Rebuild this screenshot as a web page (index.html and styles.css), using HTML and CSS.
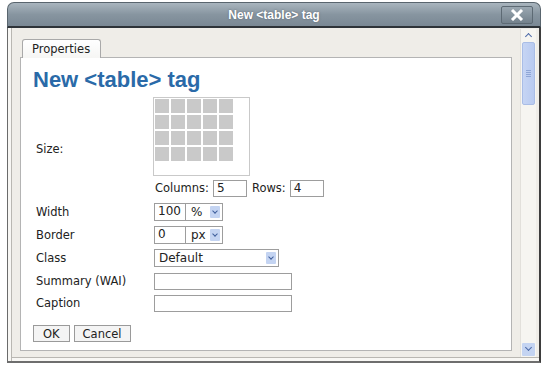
FILE: index.html
```html
<!DOCTYPE html>
<html>
<head>
    <title>New &lt;table&gt; tag</title>
    <link rel="stylesheet" href="styles.css">
</head>
<body>
    <div class="window">
        <div class="titlebar">
            <span class="title">New &lt;table&gt; tag</span>
            <div class="close">
                <svg width="14" height="12" viewBox="0 0 14 12"><path d="M2 1 L12 11 M12 1 L2 11" stroke="#fff" stroke-width="3"/></svg>
            </div>
        </div>
        <div class="frame">
            <div class="content">
                <div class="tabs">
                    <div class="tab">Properties</div>
                </div>
                <div class="panel">
                    <h1 class="heading">New &lt;table&gt; tag</h1>

                    <div class="form">
                        <div class="label size-label">Size:</div>
                        <div class="field">
                            <div class="picker">
                                <span></span><span></span><span></span><span></span><span></span>
                                <span></span><span></span><span></span><span></span><span></span>
                                <span></span><span></span><span></span><span></span><span></span>
                                <span></span><span></span><span></span><span></span><span></span>
                            </div>
                        </div>
                        <div class="field">
                            <span class="inline-label">Columns:</span>
                            <div class="input short">5</div>
                            <span class="inline-label rows">Rows:</span>
                            <div class="input short">4</div>
                        </div>

                        <div class="label">Width</div>
                        <div class="field">
                            <div class="input num">100</div>
                            <div class="select unit">%<i class="arrow"></i></div>
                        </div>

                        <div class="label">Border</div>
                        <div class="field">
                            <div class="input num">0</div>
                            <div class="select unit">px<i class="arrow"></i></div>
                        </div>

                        <div class="label">Class</div>
                        <div class="field">
                            <div class="select wide">Default<i class="arrow"></i></div>
                        </div>

                        <div class="label">Summary (WAI)</div>
                        <div class="field">
                            <div class="input text"></div>
                        </div>

                        <div class="label">Caption</div>
                        <div class="field">
                            <div class="input text"></div>
                        </div>
                    </div>

                    <div class="buttons">
                        <button class="btn ok">OK</button>
                        <button class="btn">Cancel</button>
                    </div>
                </div>
            </div>
            <div class="scrollbar">
                <div class="sb-arrow up"></div>
                <div class="thumb"><span class="grip"></span></div>
                <div class="track"></div>
                <div class="sb-arrow down"></div>
            </div>
        </div>
    </div>
</body>
</html>
```

FILE: styles.css
```css
body {
    margin: 0;
    background: #ffffff;
    font-family: "DejaVu Sans", Verdana, sans-serif;
    font-size: 11.5px;
    color: #222;
}

.window {
    margin: 2px 0 0 7px;
    width: 534px;
}

.titlebar {
    height: 23px;
    border: 1px solid #59656e;
    border-bottom: 2px solid #2e3338;
    border-radius: 7px 7px 0 0;
    background: linear-gradient(#a9b5be, #8795a0 50%, #7a8894);
    display: flex;
    align-items: center;
    justify-content: center;
    position: relative;
}

.title {
    font-family: "Liberation Sans", Arial, sans-serif;
    font-weight: bold;
    font-size: 12px;
    color: #fff;
    text-shadow: 0 0 2px #56626b;
}

.close {
    position: absolute;
    right: 7px;
    top: 3px;
    width: 30px;
    height: 16px;
    border: 1px solid #5d6a74;
    border-radius: 2px;
    background: linear-gradient(#9aa7b1, #73818c);
    display: flex;
    align-items: center;
    justify-content: center;
}

.frame {
    display: flex;
    height: 333px;
    border-left: 1px solid #6b6b6b;
    border-right: 2px solid #3d3d3d;
    border-bottom: 2px solid #6e6e6e;
    background: #efede8;
    box-shadow: inset 3px 0 0 #f8f7f4, inset 4px 0 0 #b9b7b2, inset 0 -3px 0 #f8f7f4, inset 0 -4px 0 #b9b7b2;
}

.content {
    flex: 1;
    padding: 10px 8px 0 12px;
}

.tabs {
    display: flex;
    padding-left: 2px;
}

.tab {
    height: 18px;
    padding: 0 10px 0 9px;
    line-height: 18px;
    font-size: 11.5px;
    border: 1px solid #a9a9a9;
    border-bottom: none;
    border-radius: 3px 3px 0 0;
    background: linear-gradient(#ffffff, #f6f6f4);
    position: relative;
    top: 1px;
}

.panel {
    height: 292px;
    background: #fff;
    border: 1px solid #b4b4b4;
    padding: 0 0 0 15px;
}

.heading {
    margin: 6px 0 0 -3px;
    height: 33px;
    font-family: "Liberation Sans", Arial, sans-serif;
    font-size: 22px;
    line-height: 32px;
    color: #2a6aa8;
}

.form {
    display: grid;
    grid-template-columns: 117px auto;
    grid-template-rows: 79px 24px 24px 21px 25px 22px 22px;
}

.label {
    align-self: center;
}

.size-label {
    grid-row: span 2;
}

.field {
    display: flex;
    align-items: center;
}

.picker {
    align-self: stretch;
    width: 94px;
    border: 1px solid #c9c9c9;
    display: grid;
    grid-template-columns: repeat(5, 14px);
    grid-auto-rows: 14px;
    gap: 2px;
    padding: 1px 0 0 1px;
    align-content: start;
}

.picker span {
    background: #c9c9c9;
}

.inline-label {
    margin: 0 4px 0 2px;
}

.inline-label.rows {
    margin-left: 5px;
}

.input, .select {
    height: 15px;
    line-height: 15px;
    border: 1px solid #9d9d9d;
    background: #fff;
    padding-left: 3px;
    font-size: 12px;
}

.input.short {
    width: 29px;
}

.input.num {
    width: 27px;
    height: 16px;
    margin-left: 1px;
}

.input.text {
    width: 133px;
    margin-left: 1px;
}

.select {
    position: relative;
    height: 16px;
    line-height: 16px;
    padding-left: 5px;
}

.select.unit {
    width: 31px;
    border-left: none;
}

.select.wide {
    width: 119px;
    padding-left: 4px;
    margin-left: 1px;
}

.arrow {
    position: absolute;
    right: 2px;
    top: 2px;
    width: 10px;
    height: 12px;
    background: #c4d4f2;
    border-radius: 1px;
}

.arrow::after {
    content: "";
    position: absolute;
    left: 3px;
    top: 3px;
    width: 3px;
    height: 3px;
    border-right: 1.5px solid #3f5f9c;
    border-bottom: 1.5px solid #3f5f9c;
    transform: rotate(45deg);
}

.buttons {
    display: flex;
    gap: 4px;
    margin: 11px 0 0 -3px;
}

.btn {
    font-family: "DejaVu Sans", Verdana, sans-serif;
    font-size: 11.5px;
    height: 17px;
    padding: 0 8px;
    border: 1px solid #9a9a9a;
    background: #f4f4f4;
    color: #222;
}

.btn.ok {
    padding: 0 9px;
}

.scrollbar {
    width: 15px;
    margin: 1px 3px 4px 0;
    background: #f6f5f1;
    border-left: 1px solid #e2e0db;
    display: flex;
    flex-direction: column;
}

.sb-arrow {
    height: 13px;
    position: relative;
}

.sb-arrow::after {
    content: "";
    position: absolute;
    left: 5px;
    width: 4px;
    height: 4px;
    border-left: 1.5px solid #4d6aa8;
    border-top: 1.5px solid #4d6aa8;
}

.sb-arrow.up::after {
    top: 5px;
    transform: rotate(45deg);
}

.sb-arrow.down {
    background: #c4d4f2;
    margin: 0 1px 1px 1px;
    border-radius: 1px;
}

.sb-arrow.down::after {
    top: 2px;
    left: 4px;
    transform: rotate(225deg);
}

.thumb {
    height: 61px;
    margin: 0 1px;
    background: linear-gradient(90deg, #c6d5f4, #b8caf0);
    border: 1px solid #a9bde6;
    border-radius: 2px;
    display: flex;
    align-items: center;
    justify-content: center;
}

.grip {
    width: 5px;
    height: 7px;
    background: repeating-linear-gradient(#8fa6d6 0 1px, transparent 1px 2px);
}

.track {
    flex: 1;
}
```
